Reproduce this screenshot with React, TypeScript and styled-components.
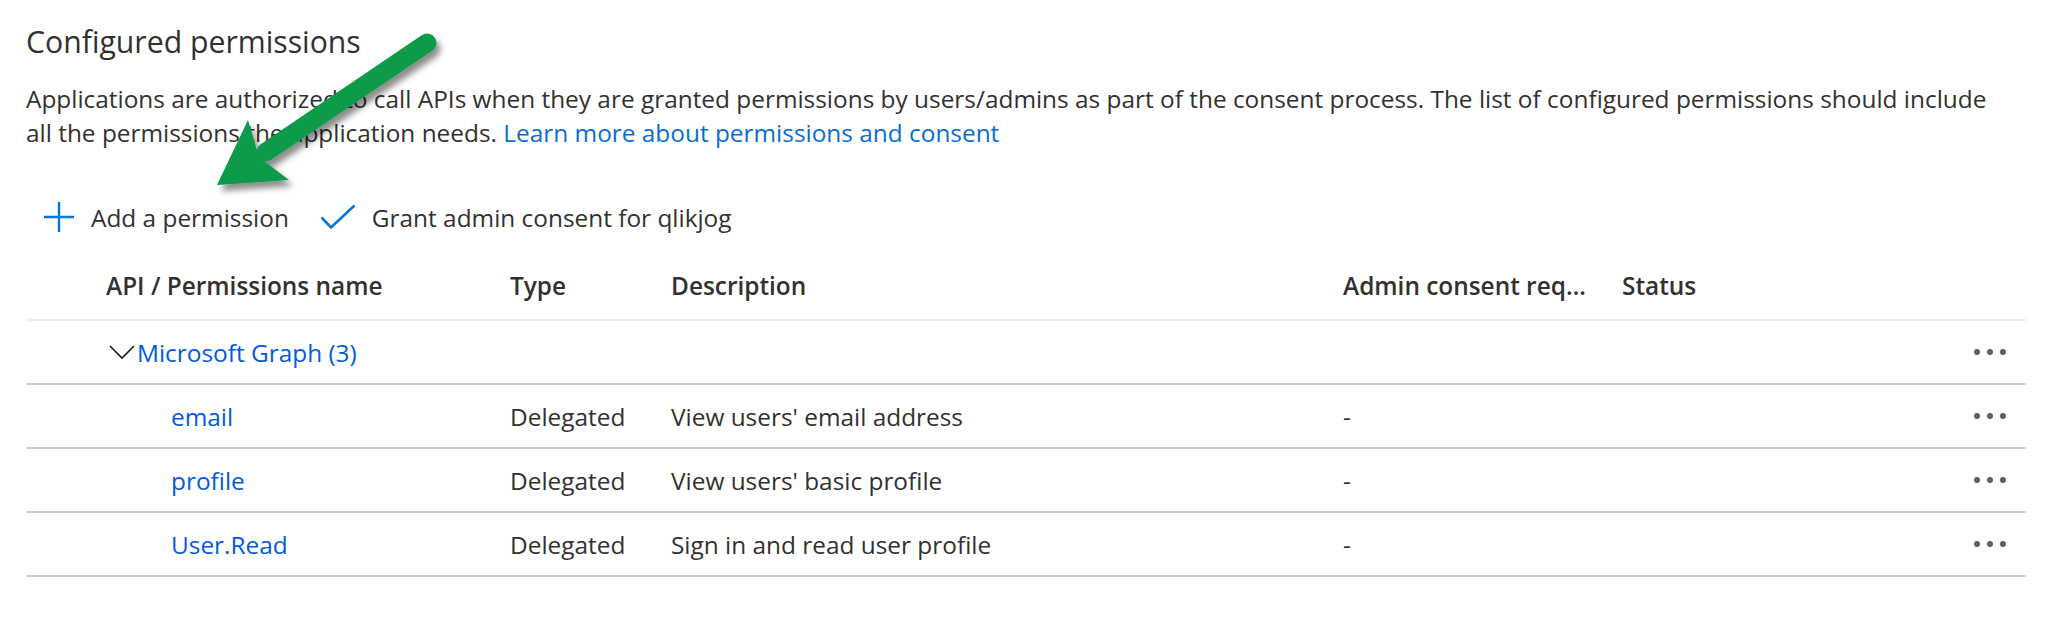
import React from 'react';
import styled, { createGlobalStyle } from 'styled-components';

const GlobalStyle = createGlobalStyle`
  body {
    margin: 0;
    background: #ffffff;
    font-family: "Segoe UI", "Open Sans", sans-serif;
    color: #323130;
  }
`;

const columns = '80px 404px 161px 672px 279px 1fr 60px';

const permissions = [
  { name: 'email', type: 'Delegated', description: "View users' email address", admin: '-' },
  { name: 'profile', type: 'Delegated', description: "View users' basic profile", admin: '-' },
  { name: 'User.Read', type: 'Delegated', description: 'Sign in and read user profile', admin: '-' },
];

const PlusIcon = () => (
  <svg width="32" height="32" viewBox="0 0 32 32">
    <path d="M16 1v30M1 16h30" stroke="#0078d4" strokeWidth="2.4" fill="none" />
  </svg>
);

const CheckIcon = () => (
  <svg width="36" height="26" viewBox="0 0 36 26">
    <path d="M1.5 13.5l9.5 10L34.5 1.5" stroke="#0078d4" strokeWidth="2.6" fill="none" />
  </svg>
);

const ChevronDown = () => (
  <svg width="26" height="16" viewBox="0 0 26 16">
    <path d="M1 2l12 12L25 2" stroke="#1b1b1b" strokeWidth="1.6" fill="none" />
  </svg>
);

const MoreDots = () => (
  <DotGroup>
    <Dot />
    <Dot />
    <Dot />
  </DotGroup>
);

const GreenArrow = () => (
  <ArrowSvg width="470" height="230" viewBox="0 0 470 230">
    <defs>
      <filter id="arrowShadow" x="-20%" y="-20%" width="140%" height="140%">
        <feDropShadow dx="4" dy="6" stdDeviation="3" floodColor="#000" floodOpacity="0.45" />
      </filter>
    </defs>
    <g filter="url(#arrowShadow)" fill="#0c9a48" stroke="none">
      <path d="M427 43L266 152" stroke="#0c9a48" strokeWidth="19" strokeLinecap="round" />
      <polygon points="217,185 289,180 259,157 248,120" />
    </g>
  </ArrowSvg>
);

const App = () => {
  return (
    <Page>
      <GlobalStyle />
      <Title>Configured permissions</Title>
      <Intro>
        Applications are authorized to call APIs when they are granted permissions by users/admins as part of the
        consent process. The list of configured permissions should include all the permissions the application needs.{' '}
        <IntroLink>Learn more about permissions and consent</IntroLink>
      </Intro>
      <Toolbar>
        <ToolbarButton>
          <PlusIcon />
          <span>Add a permission</span>
        </ToolbarButton>
        <ToolbarButton>
          <CheckIcon />
          <span>Grant admin consent for qlikjog</span>
        </ToolbarButton>
      </Toolbar>
      <Table>
        <HeaderRow>
          <span />
          <HeaderCell>API / Permissions name</HeaderCell>
          <HeaderCell>Type</HeaderCell>
          <HeaderCell>Description</HeaderCell>
          <HeaderCell>Admin consent required</HeaderCell>
          <HeaderCell>Status</HeaderCell>
          <span />
        </HeaderRow>
        <Row>
          <span />
          <GroupCell>
            <ChevronDown />
            <TableLink>Microsoft Graph (3)</TableLink>
          </GroupCell>
          <Actions>
            <MoreDots />
          </Actions>
        </Row>
        {permissions.map((p) => (
          <Row key={p.name}>
            <span />
            <Cell $indent={65}>
              <TableLink>{p.name}</TableLink>
            </Cell>
            <Cell>{p.type}</Cell>
            <Cell>{p.description}</Cell>
            <Cell>{p.admin}</Cell>
            <Cell />
            <Actions>
              <MoreDots />
            </Actions>
          </Row>
        ))}
      </Table>
      <GreenArrow />
    </Page>
  );
};

const Page = styled.div`
  position: relative;
  padding: 20px 20px 40px 26px;
`;

const Title = styled.h2`
  margin: 0 0 18px;
  font-size: 30.2px;
  font-weight: 400;
  line-height: 44px;
  color: #323130;
`;

const Intro = styled.p`
  margin: 0;
  font-size: 24.4px;
  line-height: 34px;
  max-width: 1990px;
`;

const IntroLink = styled.a`
  color: #0a6cd4;
  cursor: pointer;
`;

const Toolbar = styled.div`
  display: flex;
  align-items: center;
  gap: 31px;
  height: 44px;
  margin-top: 45px;
  padding-left: 17px;
`;

const ToolbarButton = styled.button`
  display: flex;
  align-items: center;
  gap: 16px;
  padding: 0;
  border: none;
  background: none;
  font: inherit;
  font-size: 24.4px;
  color: #323130;
  cursor: pointer;
`;

const Table = styled.div`
  margin-top: 12px;
  font-size: 24.4px;
`;

const HeaderRow = styled.div`
  display: grid;
  grid-template-columns: ${columns};
  align-items: center;
  height: 68px;
  border-bottom: 2px solid #ebebeb;
`;

const HeaderCell = styled.div`
  font-weight: 600;
  white-space: nowrap;
  overflow: hidden;
  text-overflow: ellipsis;
  padding-right: 28px;
`;

const Row = styled.div`
  display: grid;
  grid-template-columns: ${columns};
  align-items: center;
  height: 62px;
  border-bottom: 2px solid #cccccc;
`;

const Cell = styled.div<{ $indent?: number }>`
  padding-left: ${(p) => p.$indent ?? 0}px;
  white-space: nowrap;
`;

const GroupCell = styled.div`
  grid-column: 2 / 7;
  display: flex;
  align-items: center;
  gap: 2px;
  padding-left: 3px;
`;

const TableLink = styled.a`
  color: #015cda;
  cursor: pointer;
`;

const Actions = styled.div`
  display: flex;
  justify-content: flex-end;
  padding-right: 20px;
`;

const DotGroup = styled.span`
  display: flex;
  gap: 7px;
`;

const Dot = styled.span`
  width: 6px;
  height: 6px;
  border-radius: 50%;
  background: #5f5f5f;
`;

const ArrowSvg = styled.svg`
  position: absolute;
  left: 0;
  top: 0;
  pointer-events: none;
`;

export default App;
